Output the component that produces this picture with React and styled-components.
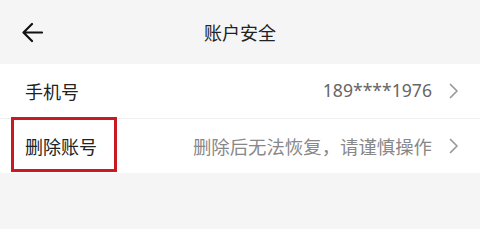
import React from "react";
import styled, { createGlobalStyle } from "styled-components";

const Global = createGlobalStyle`
  html, body { margin: 0; padding: 0; background: #f5f5f5; }
  body { font-family: "Noto Sans CJK SC", "Noto Sans", sans-serif; }
`;

const Page = styled.div`
  width: 480px;
  height: 229px;
  background: #f5f5f5;
  display: flex;
  flex-direction: column;
`;

const Header = styled.div`
  height: 64px;
  display: grid;
  grid-template-columns: 64px 1fr 64px;
  align-items: center;
`;

const BackButton = styled.div`
  display: flex;
  align-items: center;
  padding-left: 22px;
`;

const Title = styled.div`
  text-align: center;
  font-size: 18px;
  color: #222;
  line-height: 1;
`;

const List = styled.div`
  background: #fff;
  display: flex;
  flex-direction: column;
`;

const Row = styled.div`
  height: 54px;
  display: flex;
  align-items: center;
  padding: 0 21px 0 25px;
  position: relative;
  border-top: ${(p) => (p.$divider ? "1px solid #f0f0f0" : "none")};
`;

const Label = styled.div`
  font-size: 18px;
  color: #222;
  flex: 1;
  line-height: 1;
`;

const Value = styled.div`
  font-size: ${(p) => (p.$num ? "17.6px" : "18.4px")};
  color: ${(p) => p.$color || "#666"};
  line-height: 1;
  margin-right: 17px;
  font-family: ${(p) => (p.$num ? "\"Noto Sans\", \"Noto Sans CJK SC\", sans-serif" : "inherit")};
`;

const Highlight = styled.div`
  position: absolute;
  left: 11px;
  top: -2px;
  width: 106px;
  height: 55px;
  border: 3px solid #c81a20;
  box-sizing: border-box;
  pointer-events: none;
`;

const Chevron = () => (
  <svg width="10" height="16" viewBox="0 0 10 16">
    <path d="M1.5 1.5 L8 8 L1.5 14.5" fill="none" stroke="#999" strokeWidth="1.7" strokeLinecap="round" strokeLinejoin="round" />
  </svg>
);

const BackArrow = () => (
  <svg width="21" height="21" viewBox="0 0 21 21">
    <path d="M20 10.5 H2 M10 2 L1.5 10.5 L10 19" fill="none" stroke="#111" strokeWidth="2.2" strokeLinecap="round" strokeLinejoin="round" />
  </svg>
);

export default function App() {
  return (
    <Page>
      <Global />
      <Header>
        <BackButton><BackArrow /></BackButton>
        <Title>账户安全</Title>
        <div />
      </Header>
      <List>
        <Row>
          <Label>手机号</Label>
          <Value $num>189****1976</Value>
          <Chevron />
        </Row>
        <Row $divider>
          <Label>删除账号</Label>
          <Value $color="#888">删除后无法恢复，请谨慎操作</Value>
          <Chevron />
          <Highlight />
        </Row>
      </List>
    </Page>
  );
}
